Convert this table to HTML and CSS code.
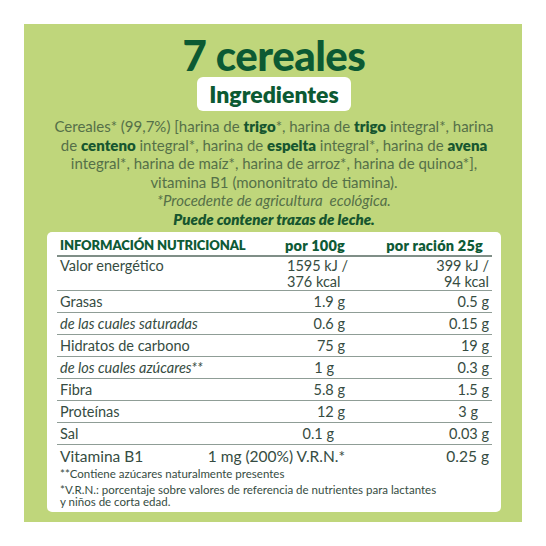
FILE: index.html
```html
<!DOCTYPE html>
<html lang="es">
<head>
    <meta charset="UTF-8">
    <meta name="viewport" content="width=device-width, initial-scale=1.0">
    <title>7 cereales</title>
    <link rel="stylesheet" href="styles.css">
</head>
<body>
    <div class="panel">
        <h1 class="title">7 cereales</h1>
        <div class="pill-wrap"><span class="pill">Ingredientes</span></div>
        <p class="ingr">
            Cereales* (99,7%) [harina de <b>trigo</b>*, harina de <b>trigo</b> integral*, harina<br>
            de <b>centeno</b> integral*, harina de <b>espelta</b> integral*, harina de <b>avena</b><br>
            integral*, harina de maíz*, harina de arroz*, harina de quinoa*],<br>
            vitamina B1 (mononitrato de tiamina).<br>
            <i>*Procedente de agricultura&nbsp; ecológica.</i><br>
            <i class="warn">Puede contener trazas de leche.</i>
        </p>

        <div class="nutri">
            <div class="row head">
                <span>INFORMACIÓN NUTRICIONAL</span>
                <span class="num">por 100g</span>
                <span class="num last">por ración 25g</span>
            </div>
            <div class="row tall">
                <span>Valor energético</span>
                <span class="num left">1595 kJ /<br>376 kcal</span>
                <span class="num">399 kJ /<br>94 kcal</span>
            </div>
            <div class="row">
                <span>Grasas</span>
                <span class="num">1.9 g</span>
                <span class="num">0.5 g</span>
            </div>
            <div class="row">
                <span class="it">de las cuales saturadas</span>
                <span class="num">0.6 g</span>
                <span class="num">0.15 g</span>
            </div>
            <div class="row">
                <span>Hidratos de carbono</span>
                <span class="num">75 g</span>
                <span class="num">19 g</span>
            </div>
            <div class="row">
                <span class="it">de los cuales azúcares**</span>
                <span class="num off">1 g</span>
                <span class="num">0.3 g</span>
            </div>
            <div class="row">
                <span>Fibra</span>
                <span class="num">5.8 g</span>
                <span class="num">1.5 g</span>
            </div>
            <div class="row">
                <span>Proteínas</span>
                <span class="num">12 g</span>
                <span class="num off">3 g</span>
            </div>
            <div class="row">
                <span>Sal</span>
                <span class="num off">0.1 g</span>
                <span class="num">0.03 g</span>
            </div>
            <div class="row vit">
                <span class="vit-name">Vitamina B1</span>
                <span class="num vit-val">1 mg (200%) V.R.N.*</span>
                <span class="num">0.25 g</span>
            </div>
            <p class="note">**Contiene azúcares naturalmente presentes</p>
            <p class="note">*V.R.N.: porcentaje sobre valores de referencia de nutrientes para lactantes<br>y niños de corta edad.</p>
        </div>
    </div>
</body>
</html>
```

FILE: styles.css
```css
body { margin: 0; background: #fff; font-family: Lato, "Noto Sans", sans-serif; }
.panel { margin: 24px; width: 498px; height: 498px; box-sizing: border-box; background: #bfd67b; padding: 11px 21px 0 23px; }
.title { margin: 0; text-align: center; font-size: 42px; font-weight: 900; line-height: 40px; color: #0c5a33; letter-spacing: -0.5px; }
.pill-wrap { display: flex; justify-content: center; margin-top: 2px; }
.pill { display: block; background: #fff; border-radius: 6px; padding: 0 12px; height: 34px; line-height: 34px; font-size: 23px; font-weight: 800; color: #0c5a33; }
.ingr { margin: 6px 0 0; text-align: center; font-size: 15px; line-height: 18.5px; color: #557048; }
.ingr b { color: #17562f; font-weight: 800; }
.ingr .warn { color: #17562f; font-weight: 800; }
.nutri { margin-top: 4px; background: #fff; border-radius: 5px; padding: 2px 9px 3px 10px; color: #364c42; font-size: 14.5px; }
.row { display: grid; grid-template-columns: 191px 100px 1fr; border-bottom: 1px solid #8f9d96; line-height: 17px; padding: 2px 0; }
.row span { padding: 0 3px; white-space: nowrap; }
.num { text-align: right; }
.head { color: #0e5a36; font-weight: 800; font-size: 13px; letter-spacing: -0.1px; border-bottom: 2px solid #7f8e87; padding: 3px 0 1px; }
.head .num { font-size: 14.5px; letter-spacing: 0.2px; }
.head .last { padding-right: 9px; }
.tall { line-height: 16px; padding: 1px 0 0; }
.it { font-style: italic; }
.off { padding-right: 14px !important; }
.row .left { text-align: left; padding-left: 39px; }
.vit { border-bottom: none; font-size: 15.5px; line-height: 20px; padding: 1px 0 1px; }
.vit-name { grid-row: 1; grid-column: 1; }
.vit-val { grid-row: 1; grid-column: 1 / 3; }
.note { margin: 1px 0 0 3px; font-size: 11.5px; line-height: 12.5px; }
.note + .note { margin-top: 3px; }
```
